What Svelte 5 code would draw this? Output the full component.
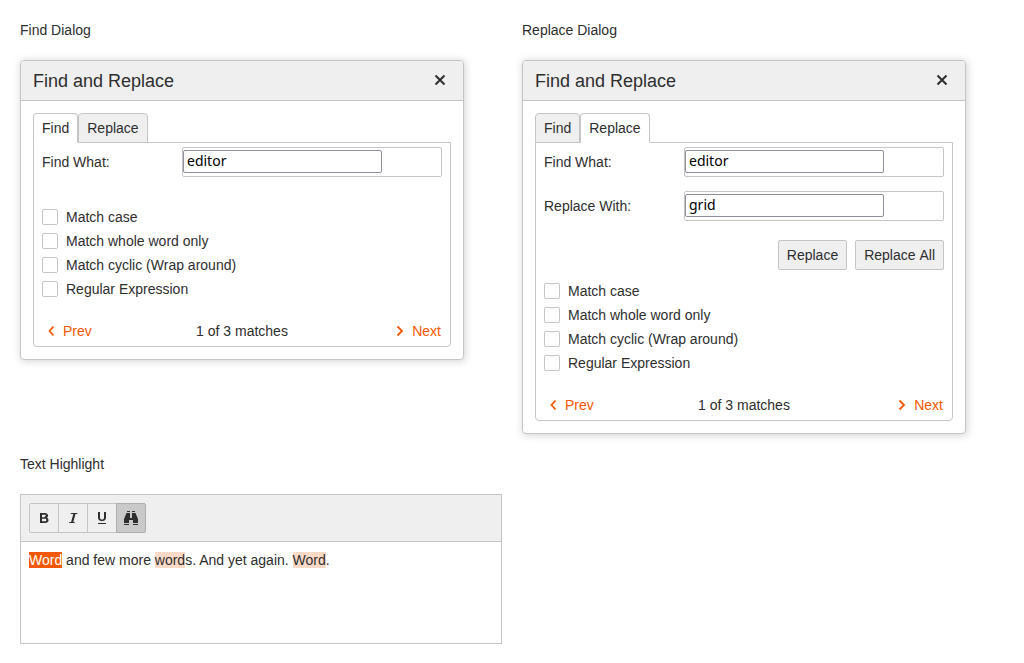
<script>
  const options = ['Match case', 'Match whole word only', 'Match cyclic (Wrap around)', 'Regular Expression'];

  const dialogs = [
    { id: 'find', heading: 'Find Dialog', active: 'Find', fields: [{ label: 'Find What:', value: 'editor' }] },
    {
      id: 'replace',
      heading: 'Replace Dialog',
      active: 'Replace',
      fields: [
        { label: 'Find What:', value: 'editor' },
        { label: 'Replace With:', value: 'grid' }
      ]
    }
  ];
</script>

<main>
  {#each dialogs as dialog}
    <section>
      <h2>{dialog.heading}</h2>
      <div class="dialog" role="dialog" aria-labelledby="{dialog.id}-title">
        <header>
          <h3 id="{dialog.id}-title">Find and Replace</h3>
          <button class="close" aria-label="Close">
            <svg width="16" height="16" viewBox="0 0 16 16"><path d="M3.500 2.500l9 9M12.500 2.500l-9 9" /></svg>
          </button>
        </header>
        <div class="body">
          <div class="tabs" role="tablist">
            {#each ['Find', 'Replace'] as tab}
              <button class="tab" class:active={tab === dialog.active} role="tab" aria-selected={tab === dialog.active}>{tab}</button>
            {/each}
          </div>
          <div class="panel" role="tabpanel">
            <div class="fields">
              {#each dialog.fields as field, i}
                <div class="field">
                  <label for="{dialog.id}-{i}">{field.label}</label>
                  <div class="box"><input id="{dialog.id}-{i}" type="text" value={field.value} /></div>
                </div>
              {/each}
            </div>
            {#if dialog.id === 'replace'}
              <div class="actions">
                <button class="action">Replace</button>
                <button class="action">Replace All</button>
              </div>
            {/if}
            <div class="options" class:spaced={dialog.id === 'find'}>
              {#each options as option}
                <label class="option"><input type="checkbox" />{option}</label>
              {/each}
            </div>
            <div class="pager">
              <button class="link">
                <svg width="16" height="16" viewBox="0 0 16 16"><path d="M10.500 3.500L6.500 8l4 4.500" /></svg>Prev
              </button>
              <span>1 of 3 matches</span>
              <button class="link">
                <svg width="16" height="16" viewBox="0 0 16 16"><path d="M5.500 3.500L10 8l-4.500 4.500" /></svg>Next
              </button>
            </div>
          </div>
        </div>
      </div>
    </section>
  {/each}

  <section>
    <h2>Text Highlight</h2>
    <div class="editor">
      <div class="toolbar" role="toolbar" aria-label="Formatting">
        <button class="tool" aria-label="Bold">
          <svg width="16" height="16" viewBox="0 0 16 16"><path fill-rule="evenodd" d="M4 3h4.600c2.200 0 3.400 1 3.400 2.700 0 1-.5 1.700-1.400 2.100 1.200.3 1.900 1.200 1.900 2.400 0 1.800-1.300 2.800-3.500 2.800H4zM6 4.700v2.500h2.300c1.100 0 1.600-.4 1.600-1.200 0-.9-.5-1.300-1.600-1.300zM6 8.700v2.600h2.600c1.200 0 1.800-.4 1.800-1.300s-.6-1.300-1.800-1.300z" /></svg>
        </button>
        <button class="tool" aria-label="Italic">
          <svg width="16" height="16" viewBox="0 0 16 16"><path d="M6 3h6.500l-.3 1h-1.700L8.300 12h1.500l-.3 1H4l.3-1h1.800l2.200-8H5.700z" /></svg>
        </button>
        <button class="tool" aria-label="Underline">
          <svg width="16" height="16" viewBox="0 0 16 16"><path d="M4 2h2v5.500c0 1.400.7 2.100 2 2.100s2-.7 2-2.100V2h2v5.600c0 2.300-1.500 3.600-4 3.600S4 9.900 4 7.600zM4 13h8v1H4z" /></svg>
        </button>
        <button class="tool pressed" aria-label="Find and replace" aria-pressed="true">
          <svg width="16" height="16" viewBox="0 0 16 16"><path d="M4 1h3v1H4zM9 1h3v1H9zM3.500 3H7v5h2V3h3.500L15 9v4h-5v-3H6v3H1V9zM1 14h5v1H1zM10 14h5v1h-5z" /></svg>
        </button>
      </div>
      <div class="content"><mark class="current">Word</mark> and few more <mark>word</mark>s. And yet again. <mark>Word</mark>.</div>
    </div>
  </section>
</main>

<style>
  :global(body) {
    margin: 0;
    background: #fff;
  }
  main {
    display: grid;
    grid-template-columns: 1fr 1fr;
    gap: 20px;
    padding: 20px;
    font: 14px/20px 'Liberation Sans', Arial, sans-serif;
    color: #2e2e2e;
  }
  * {
    box-sizing: border-box;
  }
  h2,
  h3 {
    margin: 0;
    font-size: 14px;
    font-weight: 400;
  }
  h2 {
    margin-bottom: 20px;
  }
  h3 {
    font-size: 18px;
  }
  button {
    font: inherit;
    color: inherit;
    margin: 0;
    padding: 0;
    background: none;
    border: 0;
    cursor: pointer;
  }
  svg {
    display: block;
    fill: none;
    stroke: currentColor;
    stroke-width: 2;
  }
  .dialog {
    max-width: 444px;
    border: 1px solid #c5c5c5;
    border-radius: 4px;
    background: #fff;
    box-shadow: 1px 1px 7px 1px rgba(128, 128, 128, 0.3);
  }
  header {
    display: flex;
    align-items: center;
    justify-content: space-between;
    height: 40px;
    padding: 0 15px 0 12px;
    background: #efefef;
    border-bottom: 1px solid #c5c5c5;
    border-radius: 3px 3px 0 0;
  }
  .body {
    padding: 12px;
  }
  .tabs {
    display: flex;
    position: relative;
    margin-bottom: -1px;
  }
  .tab {
    padding: 4px 8px;
    background: #efefef;
    border: 1px solid #c5c5c5;
    border-radius: 4px 4px 0 0;
  }
  .tab.active {
    background: #fff;
    border-bottom-color: #fff;
  }
  .panel {
    padding: 4px 8px 0;
    border: 1px solid #c5c5c5;
    border-radius: 0 0 4px 4px;
  }
  .fields {
    display: grid;
    gap: 14px;
  }
  .field {
    display: grid;
    grid-template-columns: 140px 1fr;
    align-items: center;
  }
  .box {
    display: flex;
    align-items: flex-start;
    height: 30px;
    padding-top: 2px;
    border: 1px solid #c5c5c5;
    border-radius: 2px;
  }
  .box input {
    width: 199px;
    height: 23px;
    padding: 0 3px 2px;
    border: 1px solid #8f8f9d;
    border-radius: 2px;
    background: #fff;
    color: #000;
    font: 14px 'Noto Sans', sans-serif;
  }
  .actions {
    display: flex;
    justify-content: flex-end;
    gap: 8px;
    margin: 19px 0 9px;
  }
  .action {
    padding: 4px 8px;
    background: #efefef;
    border: 1px solid #c5c5c5;
    border-radius: 2px;
    font-kerning: none;
  }
  .options.spaced {
    margin-top: 28px;
  }
  .option {
    display: flex;
    align-items: center;
    gap: 8px;
    height: 24px;
  }
  .option input {
    appearance: none;
    width: 16px;
    height: 16px;
    margin: 0;
    border: 1px solid #c5c5c5;
    border-radius: 2px;
    background: #fff;
  }
  .pager {
    display: flex;
    align-items: center;
    justify-content: space-between;
    height: 30px;
    margin-top: 15px;
  }
  .link {
    display: flex;
    align-items: center;
    gap: 4px;
    padding: 0 1px;
    color: #f35800;
  }
  .link svg {
    stroke-width: 1.8;
  }
  .editor {
    display: flex;
    flex-direction: column;
    min-height: 150px;
    border: 1px solid #c5c5c5;
  }
  .toolbar {
    display: flex;
    padding: 8px;
    background: #efefef;
    border-bottom: 1px solid #c5c5c5;
  }
  .tool {
    display: grid;
    place-items: center;
    width: 30px;
    height: 30px;
    border: 1px solid #c5c5c5;
  }
  .tool + .tool {
    margin-left: -1px;
  }
  .tool:first-child {
    border-radius: 2px 0 0 2px;
  }
  .tool:last-child {
    border-radius: 0 2px 2px 0;
  }
  .tool svg {
    fill: currentColor;
    stroke: none;
  }
  .tool.pressed {
    background: #c9c9c9;
    border-color: #adadad;
  }
  .content {
    flex: 1;
    padding: 8px;
  }
  mark {
    color: inherit;
    background: #fddac8;
  }
  mark.current {
    color: #fff;
    background: #f35800;
  }
</style>
